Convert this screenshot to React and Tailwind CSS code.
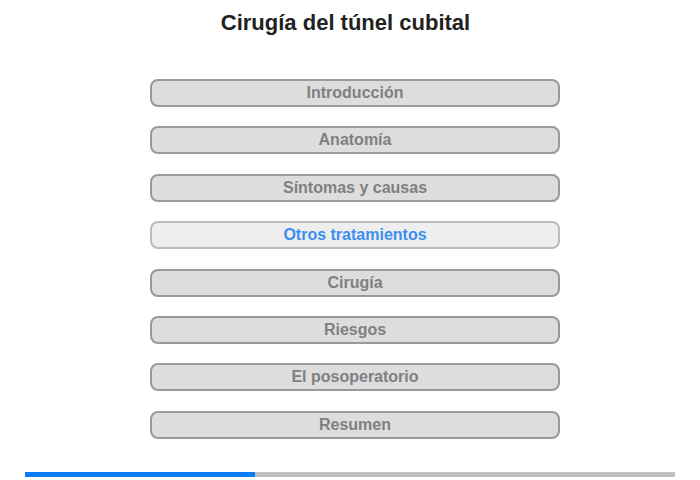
const ITEMS = [
  'Introducción',
  'Anatomía',
  'Síntomas y causas',
  'Otros tratamientos',
  'Cirugía',
  'Riesgos',
  'El posoperatorio',
  'Resumen',
]

const ACTIVE = 'Otros tratamientos'

export default function App() {
  return (
    <div className="w-[700px] h-[480px] bg-white font-['Liberation_Sans',Arial,sans-serif] flex flex-col items-center">
      <h1 className="mt-[9px] mr-[9px] text-[22px] leading-[28px] font-bold text-[#222]">Cirugía del túnel cubital</h1>

      <div className="mt-[42px] ml-[10px] flex flex-col gap-[19.4px]">
        {ITEMS.map((item) => {
          const active = item === ACTIVE
          return (
            <div
              key={item}
              className={
                active
                  ? 'w-[410px] h-[28px] rounded-[8px] border-2 border-[#bbb] bg-[#eee] text-[#3b8ff0] text-[16px] font-bold flex items-center justify-center'
                  : 'w-[410px] h-[28px] rounded-[8px] border-2 border-[#999] bg-[#ddd] text-[#808080] text-[16px] font-bold flex items-center justify-center'
              }
            >
              {item}
            </div>
          )
        })}
      </div>

      <div className="mt-auto mb-[3px] w-[650px] h-[5px] bg-[#c0c0c0] flex">
        <div className="w-[230px] h-full bg-[#0a7cf5]" />
      </div>
    </div>
  )
}
